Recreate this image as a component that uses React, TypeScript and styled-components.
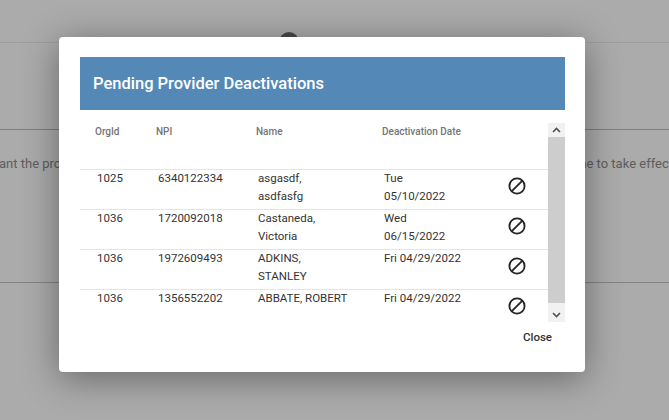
import { createGlobalStyle, styled } from "styled-components";

const GlobalStyle = createGlobalStyle`
  html, body {
    margin: 0;
    padding: 0;
    background: #fff;
    font-family: Roboto, "Liberation Sans", sans-serif;
    overflow: hidden;
  }
`;

const Page = styled.div`
  position: relative;
  width: 669px;
  height: 420px;
  overflow: hidden;
  color: #333;
`;

const PageSection = styled.div<{ $height: number; $line: string }>`
  display: flow-root;
  height: ${(p) => p.$height}px;
  border-bottom: 1px solid ${(p) => p.$line};
  box-sizing: border-box;
`;

const Avatar = styled.div`
  width: 20px;
  height: 20px;
  border-radius: 50%;
  background: #6e6e6e;
  margin: 32px 0 0 279px;
`;

const Notice = styled.p`
  margin: 25px 0 0 -1px;
  width: 674px;
  display: flex;
  justify-content: space-between;
  font-size: 13px;
  line-height: 18px;
  white-space: nowrap;
  color: #8c8c8c;
`;

const Backdrop = styled.div`
  position: absolute;
  inset: 0;
  background: rgba(0, 0, 0, 0.33);
`;

const Modal = styled.div`
  position: absolute;
  left: 59px;
  top: 37px;
  width: 526px;
  height: 335px;
  box-sizing: border-box;
  padding: 20px 20px 0 21px;
  background: #fff;
  border-radius: 4px;
  box-shadow: 0 6px 36px rgba(0, 0, 0, 0.4);
  display: flex;
  flex-direction: column;
`;

const ModalTitle = styled.h2`
  margin: 0;
  height: 53px;
  flex: none;
  padding-left: 13px;
  display: flex;
  align-items: center;
  background: #5488b6;
  color: #fff;
  font-size: 16.5px;
  font-weight: 500;
`;

const Body = styled.div`
  display: flex;
  height: 213px;
  flex: none;
`;

const Table = styled.div`
  flex: 1;
  overflow: hidden;
`;

const Row = styled.div<{ $head?: boolean }>`
  display: grid;
  grid-template-columns: 61px 100px 126px 124px 1fr;
  height: ${(p) => (p.$head ? 60 : 40)}px;
  box-sizing: border-box;
  border-bottom: 1px solid #e4e4e4;
  padding: ${(p) => (p.$head ? "13px 0 0 15px" : "0 0 0 17px")};
  font-size: ${(p) => (p.$head ? 10 : 11.5)}px;
  font-weight: ${(p) => (p.$head ? 500 : 400)};
  line-height: 18px;
  color: ${(p) => (p.$head ? "#757575" : "#333")};
`;

const Cell = styled.div<{ $max?: number }>`
  margin-top: -1px;
  max-width: ${(p) => (p.$max ? `${p.$max}px` : "none")};
`;

const Icon = styled.div`
  display: flex;
  width: 18px;
  padding-top: 7px;
`;

const Scrollbar = styled.div`
  width: 17px;
  height: 199px;
  margin-top: 13px;
  flex: none;
  display: flex;
  flex-direction: column;
  justify-content: space-between;
  background: #f1f1f1;
`;

const ScrollArrow = styled.div`
  height: 14px;
  flex: none;
  display: flex;
  align-items: center;
  justify-content: center;
`;

const ScrollThumb = styled.div`
  height: 166px;
  flex: none;
  margin-bottom: 5px;
  background: #cdcdcd;
`;

const Footer = styled.div`
  display: flex;
  justify-content: flex-end;
  padding: 5px 13px 0 0;
`;

const CloseButton = styled.button`
  border: 0;
  padding: 0;
  background: none;
  font: 500 11.5px/18px Roboto, sans-serif;
  color: #333;
`;

const rows = [
  { org: "1025", npi: "6340122334", name: "asgasdf, asdfasfg", date: "Tue 05/10/2022" },
  { org: "1036", npi: "1720092018", name: "Castaneda, Victoria", date: "Wed 06/15/2022" },
  { org: "1036", npi: "1972609493", name: "ADKINS, STANLEY", date: "Fri 04/29/2022" },
  { org: "1036", npi: "1356552202", name: "ABBATE, ROBERT", date: "Fri 04/29/2022" },
];

function BlockIcon() {
  return (
    <svg width="18" height="18" viewBox="0 0 18 18" fill="none" stroke="#222" strokeWidth="1.8">
      <circle cx="9" cy="9" r="7.6" />
      <path d="M3.8 14.2 14.2 3.8" />
    </svg>
  );
}

function Chevron({ up }: { up?: boolean }) {
  return (
    <svg width="9" height="6" viewBox="0 0 9 6" fill="none" stroke="#505050" strokeWidth="1.6">
      <path d={up ? "M1 5 4.5 1.5 8 5" : "M1 1 4.5 4.5 8 1"} />
    </svg>
  );
}

export default function App() {
  return (
    <Page>
      <GlobalStyle />
      <PageSection $height={43} $line="#ececec">
        <Avatar />
      </PageSection>
      <PageSection $height={87} $line="#bdbdbd" />
      <PageSection $height={153} $line="#c4c4c4">
        <Notice>
          <span>ant the provider deactivations</span>
          <span>will need some time to take effect</span>
        </Notice>
      </PageSection>
      <Backdrop />
      <Modal>
        <ModalTitle>Pending Provider Deactivations</ModalTitle>
        <Body>
          <Table>
            <Row $head>
              <div>OrgId</div>
              <div>NPI</div>
              <div>Name</div>
              <div>Deactivation Date</div>
            </Row>
            {rows.map((row) => (
              <Row key={row.npi}>
                <Cell>{row.org}</Cell>
                <Cell>{row.npi}</Cell>
                <Cell $max={91}>{row.name}</Cell>
                <Cell $max={80}>{row.date}</Cell>
                <Icon>
                  <BlockIcon />
                </Icon>
              </Row>
            ))}
          </Table>
          <Scrollbar>
            <ScrollArrow>
              <Chevron up />
            </ScrollArrow>
            <ScrollThumb />
            <ScrollArrow>
              <Chevron />
            </ScrollArrow>
          </Scrollbar>
        </Body>
        <Footer>
          <CloseButton>Close</CloseButton>
        </Footer>
      </Modal>
    </Page>
  );
}
